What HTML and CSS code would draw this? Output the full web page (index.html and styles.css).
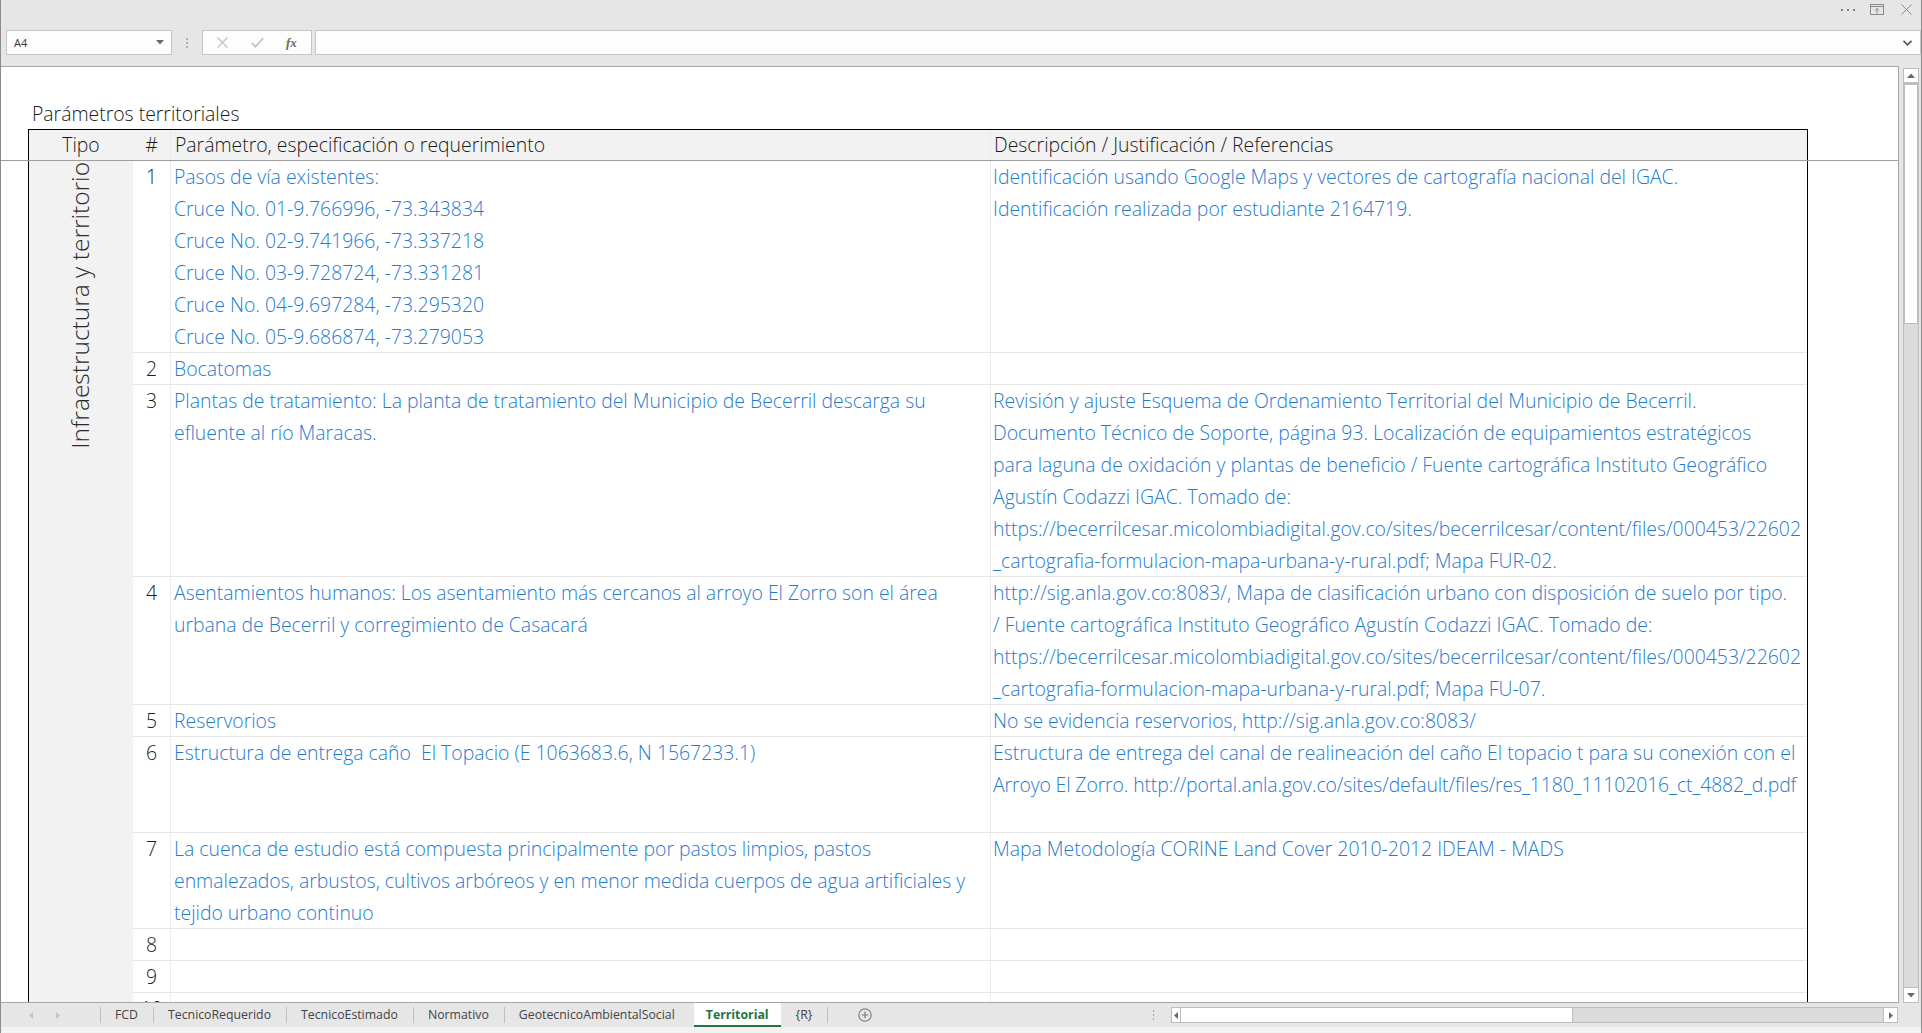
FILE: index.html
```html
<!DOCTYPE html>
<html lang="es">
<head>
<meta charset="utf-8">
<title>Territorial</title>
<link rel="stylesheet" href="styles.css">
</head>
<body>
<div class="window">
  <div class="titlebar">
    <div class="winctl">
      <span class="more"><i></i><i></i><i></i></span>
      <svg class="restore" width="14" height="11" viewBox="0 0 14 11"><rect x="0.5" y="0.5" width="13" height="10" fill="none" stroke="#8a8a8a"/><line x1="0.5" y1="2.5" x2="13.5" y2="2.5" stroke="#8a8a8a"/><path d="M7 9.5V4.5M5 6.5L7 4.5L9 6.5" fill="none" stroke="#8a8a8a"/></svg>
      <svg class="close" width="11" height="11" viewBox="0 0 11 11"><path d="M0.5 0.5L10.5 10.5M10.5 0.5L0.5 10.5" stroke="#8a8a8a" stroke-width="1"/></svg>
    </div>
  </div>
  <div class="fbar">
    <div class="namebox"><span>A4</span><svg width="8" height="5" viewBox="0 0 8 5"><path d="M0 0H8L4 4.5Z" fill="#6a6a6a"/></svg></div>
    <div class="vdots"><i></i><i></i><i></i></div>
    <div class="fbtns">
      <svg class="ic-x" width="11" height="11" viewBox="0 0 11 11"><path d="M0.5 0.5L10.5 10.5M10.5 0.5L0.5 10.5" stroke="#c2c2c2" stroke-width="1.3"/></svg>
      <svg class="ic-ok" width="13" height="11" viewBox="0 0 13 11"><path d="M0.8 5.8L4.6 9.6L12.2 1" fill="none" stroke="#c2c2c2" stroke-width="1.8"/></svg>
      <span class="fx">fx</span>
    </div>
    <div class="finput"><svg width="9" height="6" viewBox="0 0 9 6"><path d="M0.5 0.8L4.5 4.8L8.5 0.8" fill="none" stroke="#555" stroke-width="1.6"/></svg></div>
  </div>
  <div class="main">
    <div class="sheet">
      <div class="frozen">
        <div class="title">Parámetros territoriales</div>
        <div class="grid head">
          <div class="hc center">Tipo</div>
          <div class="hc center">#</div>
          <div class="hc par">Parámetro, especificación o requerimiento</div>
          <div class="hc desc">Descripción / Justificación / Referencias</div>
        </div>
      </div>
      <div class="grid body">
        <div class="tipo"><span class="vtext">Infraestructura y territorio</span></div>

        <div class="c num">1</div>
        <div class="c par">
          <div class="ln">Pasos de vía existentes:</div>
          <div class="ln">Cruce No. 01-9.766996, -73.343834</div>
          <div class="ln">Cruce No. 02-9.741966, -73.337218</div>
          <div class="ln">Cruce No. 03-9.728724, -73.331281</div>
          <div class="ln">Cruce No. 04-9.697284, -73.295320</div>
          <div class="ln">Cruce No. 05-9.686874, -73.279053</div>
        </div>
        <div class="c desc">
          <div class="ln">Identificación usando Google Maps y vectores de cartografía nacional del IGAC.</div>
          <div class="ln">Identificación realizada por estudiante 2164719.</div>
        </div>

        <div class="c num">2</div>
        <div class="c par"><div class="ln">Bocatomas</div></div>
        <div class="c desc"></div>

        <div class="c num">3</div>
        <div class="c par">
          <div class="ln">Plantas de tratamiento: La planta de tratamiento del Municipio de Becerril descarga su</div>
          <div class="ln">efluente al río Maracas.</div>
        </div>
        <div class="c desc">
          <div class="ln">Revisión y ajuste Esquema de Ordenamiento Territorial del Municipio de Becerril.</div>
          <div class="ln">Documento Técnico de Soporte, página 93. Localización de equipamientos estratégicos</div>
          <div class="ln">para laguna de oxidación y plantas de beneficio / Fuente cartográfica Instituto Geográfico</div>
          <div class="ln">Agustín Codazzi IGAC. Tomado de:</div>
          <div class="ln">https://becerrilcesar.micolombiadigital.gov.co/sites/becerrilcesar/content/files/000453/22602</div>
          <div class="ln">_cartografia-formulacion-mapa-urbana-y-rural.pdf; Mapa FUR-02.</div>
        </div>

        <div class="c num">4</div>
        <div class="c par">
          <div class="ln">Asentamientos humanos: Los asentamiento más cercanos al arroyo El Zorro son el área</div>
          <div class="ln">urbana de Becerril y corregimiento de Casacará</div>
        </div>
        <div class="c desc">
          <div class="ln">http://sig.anla.gov.co:8083/, Mapa de clasificación urbano con disposición de suelo por tipo.</div>
          <div class="ln">/ Fuente cartográfica Instituto Geográfico Agustín Codazzi IGAC. Tomado de:</div>
          <div class="ln">https://becerrilcesar.micolombiadigital.gov.co/sites/becerrilcesar/content/files/000453/22602</div>
          <div class="ln">_cartografia-formulacion-mapa-urbana-y-rural.pdf; Mapa FU-07.</div>
        </div>

        <div class="c num">5</div>
        <div class="c par"><div class="ln">Reservorios</div></div>
        <div class="c desc"><div class="ln">No se evidencia reservorios, http://sig.anla.gov.co:8083/</div></div>

        <div class="c num">6</div>
        <div class="c par"><div class="ln">Estructura de entrega caño&nbsp; El Topacio (E 1063683.6, N 1567233.1)</div></div>
        <div class="c desc">
          <div class="ln">Estructura de entrega del canal de realineación del caño El topacio t para su conexión con el</div>
          <div class="ln tight">Arroyo El Zorro. http://portal.anla.gov.co/sites/default/files/res_1180_11102016_ct_4882_d.pdf</div>
        </div>

        <div class="c num">7</div>
        <div class="c par">
          <div class="ln">La cuenca de estudio está compuesta principalmente por pastos limpios, pastos</div>
          <div class="ln">enmalezados, arbustos, cultivos arbóreos y en menor medida cuerpos de agua artificiales y</div>
          <div class="ln">tejido urbano continuo</div>
        </div>
        <div class="c desc"><div class="ln">Mapa Metodología CORINE Land Cover 2010-2012 IDEAM - MADS</div></div>

        <div class="c num">8</div>
        <div class="c par"></div>
        <div class="c desc"></div>

        <div class="c num">9</div>
        <div class="c par"></div>
        <div class="c desc"></div>

        <div class="c num">10</div>
        <div class="c par"></div>
        <div class="c desc"></div>
      </div>
    </div>
    <div class="vscroll">
      <div class="vframe">
        <div class="vbtn up"><svg width="8" height="5" viewBox="0 0 8 5"><path d="M0 5H8L4 0.5Z" fill="#6a6a6a"/></svg></div>
        <div class="vthumb"></div>
        <div class="vspace"></div>
        <div class="vbtn down"><svg width="8" height="5" viewBox="0 0 8 5"><path d="M0 0H8L4 4.5Z" fill="#6a6a6a"/></svg></div>
      </div>
    </div>
  </div>
  <div class="tabbar">
    <div class="navs">
      <svg width="4" height="7" viewBox="0 0 4 7"><path d="M4 0V7L0 3.5Z" fill="#c4c4c4"/></svg>
      <svg width="4" height="7" viewBox="0 0 4 7"><path d="M0 0V7L4 3.5Z" fill="#c4c4c4"/></svg>
    </div>
    <div class="tab sep">FCD</div>
    <div class="tab sep">TecnicoRequerido</div>
    <div class="tab sep">TecnicoEstimado</div>
    <div class="tab sep">Normativo</div>
    <div class="tab sep">GeotecnicoAmbientalSocial</div>
    <div class="tab active">Territorial</div>
    <div class="tab">{R}</div>
    <div class="tab sep plus"><svg width="14" height="14" viewBox="0 0 14 14"><circle cx="7" cy="7" r="6.2" fill="none" stroke="#7a7a7a" stroke-width="1.1"/><path d="M7 3.8V10.2M3.8 7H10.2" stroke="#7a7a7a" stroke-width="1.2"/></svg></div>
    <div class="tabfill"></div>
    <div class="hdots"><i></i><i></i><i></i></div>
    <div class="hscroll">
      <div class="hbtn left"><svg width="4" height="7" viewBox="0 0 4 7"><path d="M4 0V7L0 3.5Z" fill="#6a6a6a"/></svg></div>
      <div class="hthumb"></div>
      <div class="hspace"></div>
      <div class="hbtn right"><svg width="4" height="7" viewBox="0 0 4 7"><path d="M0 0V7L4 3.5Z" fill="#6a6a6a"/></svg></div>
    </div>
  </div>
  <div class="status"></div>
</div>
</body>
</html>
```

FILE: styles.css
```css
html, body {
  margin: 0;
  padding: 0;
}
body {
  width: 1922px;
  height: 1033px;
  overflow: hidden;
  background: #e6e6e6;
  font-family: "Open Sans", "Noto Sans", "Liberation Sans", sans-serif;
}
.window {
  height: 1033px;
  box-sizing: border-box;
  border-left: 1px solid #8c8c8c;
  border-right: 1px solid #8c8c8c;
  display: flex;
  flex-direction: column;
}

/* title bar */
.titlebar {
  height: 30px;
  display: flex;
  justify-content: flex-end;
}
.winctl {
  display: flex;
  align-items: flex-start;
  margin-right: 9px;
}
.more {
  display: flex;
  gap: 4px;
  margin-top: 9px;
}
.more i {
  width: 2px;
  height: 2px;
  background: #7a7a7a;
}
.restore {
  margin-left: 15px;
  margin-top: 4px;
}
.close {
  margin-left: 17px;
  margin-top: 4px;
}

/* formula bar */
.fbar {
  height: 25px;
  display: flex;
  padding-left: 5px;
  margin-bottom: 11px;
}
.namebox {
  width: 166px;
  box-sizing: border-box;
  border: 1px solid #c6c6c6;
  background: #fdfdfd;
  display: flex;
  align-items: center;
  justify-content: space-between;
  padding: 0 7px 0 7px;
  font-size: 11px;
  color: #333;
}
.vdots {
  width: 30px;
  display: flex;
  flex-direction: column;
  align-items: center;
  justify-content: center;
  gap: 2px;
}
.vdots i {
  width: 2px;
  height: 2px;
  background: #b0b0b0;
}
.fbtns {
  width: 110px;
  box-sizing: border-box;
  border: 1px solid #c6c6c6;
  background: #fdfdfd;
  display: flex;
  align-items: center;
}
.ic-x {
  margin-left: 14px;
}
.ic-ok {
  margin-left: 23px;
}
.fx {
  margin-left: 22px;
  font-family: "Liberation Serif", serif;
  font-style: italic;
  font-weight: bold;
  font-size: 13px;
  color: #6a6a6a;
}
.finput {
  flex: 1;
  margin-left: 3px;
  box-sizing: border-box;
  border: 1px solid #c6c6c6;
  background: #fdfdfd;
  display: flex;
  align-items: center;
  justify-content: flex-end;
  padding-right: 8px;
}

/* main sheet */
.main {
  height: 937px;
  display: flex;
}
.sheet {
  width: 1898px;
  box-sizing: border-box;
  border-top: 1px solid #a6a6a6;
  border-right: 1px solid #a6a6a6;
  border-bottom: 1px solid #a6a6a6;
  background: #fff;
  overflow: hidden;
}
.frozen {
  height: 94px;
  box-sizing: border-box;
  border-bottom: 1px solid #9e9e9e;
}
.title {
  padding-top: 30px;
  padding-left: 31px;
  height: 32px;
  line-height: 34px;
  font-size: 19.4px;
  font-weight: 300;
  color: #1a1a1a;
  white-space: nowrap;
}
.grid {
  display: grid;
  grid-template-columns: 104px 37px 820px 817px;
  width: 1780px;
  margin-left: 27px;
  box-sizing: border-box;
  border-left: 1px solid #000;
  border-right: 1px solid #000;
  font-size: 19.4px;
  font-weight: 300;
}
.head {
  border-top: 1px solid #000;
  background: #f2f2f2;
  height: 31px;
  color: #1a1a1a;
}
.hc {
  line-height: 30px;
  white-space: nowrap;
  overflow: hidden;
}
.center {
  text-align: center;
}
.head .par {
  padding-left: 4px;
}
.head .desc {
  padding-left: 3px;
}
.body {
  grid-template-rows: 192px 32px 192px 128px 32px 96px 96px 32px 32px 32px;
  color: #1f7bd0;
}
.tipo {
  grid-row: 1 / span 10;
  grid-column: 1;
  background: #f2f2f2;
  display: flex;
  justify-content: center;
  align-items: flex-start;
  padding-top: 1px;
  padding-right: 2px;
}
.vtext {
  writing-mode: vertical-rl;
  transform: rotate(180deg);
  line-height: 32px;
  font-size: 24.5px;
  color: #2b2b2b;
  white-space: nowrap;
}
.c {
  box-sizing: border-box;
  border-bottom: 1px solid #e4e4e4;
  overflow: hidden;
  white-space: nowrap;
}
.num {
  text-align: center;
  line-height: 32px;
  color: #1a1a1a;
}
.par {
  border-left: 1px solid #ebebeb;
  padding-left: 3px;
}
.desc {
  border-left: 1px solid #ebebeb;
  padding-left: 2px;
}
.ln {
  height: 32px;
  line-height: 32px;
}
.tight {
  letter-spacing: -0.12px;
}

/* vertical scrollbar */
.vscroll {
  flex: 1;
  padding: 2px 0 0 4px;
  box-sizing: border-box;
}
.vframe {
  width: 16px;
  height: 935px;
  box-sizing: border-box;
  border: 1px solid #bdbdbd;
  background: #dbdbdb;
  display: flex;
  flex-direction: column;
}
.vbtn {
  background: #fff;
  display: flex;
  align-items: center;
  justify-content: center;
}
.vbtn.up {
  height: 13px;
  border-bottom: 1px solid #bdbdbd;
}
.vbtn.down {
  height: 14px;
  border-top: 1px solid #bdbdbd;
}
.vthumb {
  height: 241px;
  box-sizing: border-box;
  background: #fff;
  border: 1px solid #bdbdbd;
  border-top-width: 2px;
}
.vspace {
  flex: 1;
}

/* sheet tabs */
.tabbar {
  height: 24px;
  display: flex;
  align-items: center;
  font-size: 12.3px;
  color: #444;
}
.navs {
  width: 99px;
  display: flex;
  align-items: center;
  gap: 23px;
  padding-left: 28px;
  box-sizing: border-box;
}
.tab {
  height: 24px;
  line-height: 24px;
  padding: 0 15px;
  white-space: nowrap;
  position: relative;
}
.tab.sep::before {
  content: "";
  position: absolute;
  left: 0;
  top: 4px;
  bottom: 4px;
  width: 1px;
  background: #c0c0c0;
}
.tab.active {
  background: #fff;
  color: #217346;
  font-weight: 700;
  box-sizing: border-box;
  border-bottom: 2px solid #217346;
  line-height: 23px;
  padding: 0 12px;
  margin-left: 4px;
}
.tab.plus {
  display: flex;
  align-items: center;
  padding: 0 0 0 31px;
}
.tabfill {
  flex: 1;
}
.hdots {
  width: 18px;
  display: flex;
  flex-direction: column;
  align-items: center;
  gap: 2px;
  margin-right: 9px;
}
.hdots i {
  width: 1px;
  height: 2px;
  background: #a0a0a0;
}
.hscroll {
  width: 727px;
  height: 16px;
  margin-right: 23px;
  box-sizing: border-box;
  border: 1px solid #bdbdbd;
  background: #dbdbdb;
  display: flex;
}
.hbtn {
  background: #fff;
  display: flex;
  align-items: center;
  justify-content: center;
}
.hbtn.left {
  width: 8px;
  border-right: 1px solid #bdbdbd;
}
.hbtn.right {
  width: 13px;
  border-left: 1px solid #bdbdbd;
}
.hthumb {
  width: 391px;
  background: #fff;
  border-right: 1px solid #bdbdbd;
}
.hspace {
  flex: 1;
}
.status {
  height: 6px;
  background: #f2f2f2;
}
```
